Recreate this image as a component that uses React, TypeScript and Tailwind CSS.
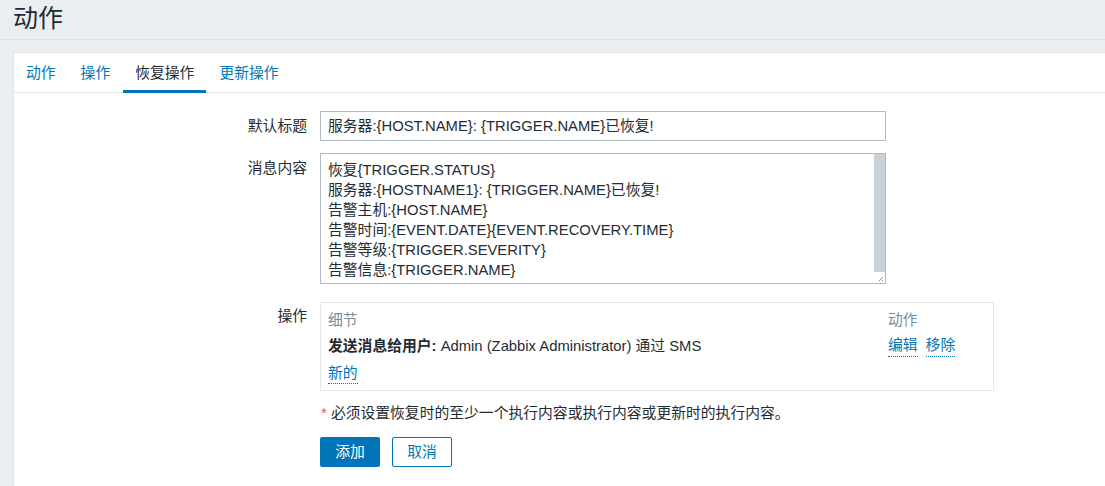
import React from 'react';

const font = { fontFamily: '"Liberation Sans", Arial, "Noto Sans CJK SC", sans-serif' };

const tabs = ['动作', '操作', '恢复操作', '更新操作'];

const messageLines = [
  '恢复{TRIGGER.STATUS}',
  '服务器:{HOSTNAME1}: {TRIGGER.NAME}已恢复!',
  '告警主机:{HOST.NAME}',
  '告警时间:{EVENT.DATE}{EVENT.RECOVERY.TIME}',
  '告警等级:{TRIGGER.SEVERITY}',
  '告警信息:{TRIGGER.NAME}',
];

function Label({ children }: { children: React.ReactNode }) {
  return (
    <div className="w-[306px] shrink-0 pr-[13px] text-right text-[#1f2c33] leading-[20px]">{children}</div>
  );
}

function DottedLink({ children }: { children: React.ReactNode }) {
  return (
    <span className="text-[#0275b8] border-b border-dotted border-[#0275b8] pb-[2px] leading-[18px]">
      {children}
    </span>
  );
}

export default function App() {
  return (
    <div className="w-[1105px] h-[486px] overflow-hidden bg-[#ebeef0] text-[14.8px]" style={font}>
      <div className="px-[13px] pt-[3px] h-[40px] border-b border-[#dfe4e7]">
        <h1 className="text-[25px] leading-[30px] text-[#1f2c33]">动作</h1>
      </div>

      <div className="ml-[13px] mt-[12px] bg-white border-l border-t border-[#dfe4e7] h-[500px]">
        <div className="flex border-b border-[#dfe4e7] h-[40px]">
          {tabs.map((t, i) => (
            <div
              key={t}
              className={
                i === 2
                  ? 'px-[12px] mr-[1px] pt-[10px] text-[#1f2c33] border-b-[3px] border-[#0275b8] leading-[20px] -mb-px'
                  : 'px-[12px] mr-[1px] pt-[10px] text-[#0275b8] leading-[20px]'
              }
            >
              {t}
            </div>
          ))}
        </div>

        <div className="pt-[18px] flex flex-col">
          <div className="flex items-start">
            <Label>
              <div className="pt-[5px]">默认标题</div>
            </Label>
            <div className="w-[566px] h-[30px] border border-[#acbbc4] px-[7px] leading-[28px] text-[#1f2c33]">
              服务器:{'{HOST.NAME}'}: {'{TRIGGER.NAME}'}已恢复!
            </div>
          </div>

          <div className="flex items-start mt-[12px]">
            <Label>
              <div className="pt-[5px]">消息内容</div>
            </Label>
            <div className="w-[566px] h-[131px] border border-[#acbbc4] flex">
              <div className="flex-1 pl-[7px] pt-[6px] text-[#1f2c33] leading-[20px]">
                {messageLines.map((l) => (
                  <div key={l}>{l}</div>
                ))}
              </div>
              <div className="w-[11px] flex flex-col">
                <div className="flex-1 bg-[#c8d1d8]" />
                <div className="h-[11px] bg-white relative">
                  <svg width="11" height="11" viewBox="0 0 11 11" className="absolute inset-0">
                    <line x1="9" y1="5" x2="5" y2="9" stroke="#8a949b" strokeWidth="1" />
                    <line x1="9" y1="8" x2="8" y2="9" stroke="#8a949b" strokeWidth="1" />
                  </svg>
                </div>
              </div>
            </div>
          </div>

          <div className="flex items-start mt-[18px]">
            <Label>
              <div className="pt-[4px]">操作</div>
            </Label>
            <div className="w-[674px] border border-[#e6e9eb] px-[7px] pt-[7px] pb-[7px]">
              <div className="grid grid-cols-[1fr_98px] gap-y-[6px] leading-[20px]">
                <div className="text-[#768d99]">细节</div>
                <div className="text-[#768d99]">动作</div>
                <div className="text-[#1f2c33]">
                  <span className="font-bold">发送消息给用户:</span> Admin (Zabbix Administrator) 通过 SMS
                </div>
                <div className="flex gap-[8px]">
                  <DottedLink>编辑</DottedLink>
                  <DottedLink>移除</DottedLink>
                </div>
                <div>
                  <DottedLink>新的</DottedLink>
                </div>
                <div />
              </div>
            </div>
          </div>

          <div className="flex items-start mt-[12px]">
            <Label>{''}</Label>
            <div className="leading-[20px] text-[#1f2c33] pl-[1px]">
              <span className="text-[#e45959]">*</span> 必须设置恢复时的至少一个执行内容或执行内容或更新时的执行内容。
            </div>
          </div>

          <div className="flex items-start mt-[14px]">
            <Label>{''}</Label>
            <div className="flex gap-[12px]">
              <button className="w-[60px] h-[30px] bg-[#0275b8] text-white rounded-[2px] leading-[28px]">
                添加
              </button>
              <button className="w-[60px] h-[30px] bg-white border border-[#0275b8] text-[#0275b8] rounded-[2px] leading-[28px]">
                取消
              </button>
            </div>
          </div>
        </div>
      </div>
    </div>
  );
}
